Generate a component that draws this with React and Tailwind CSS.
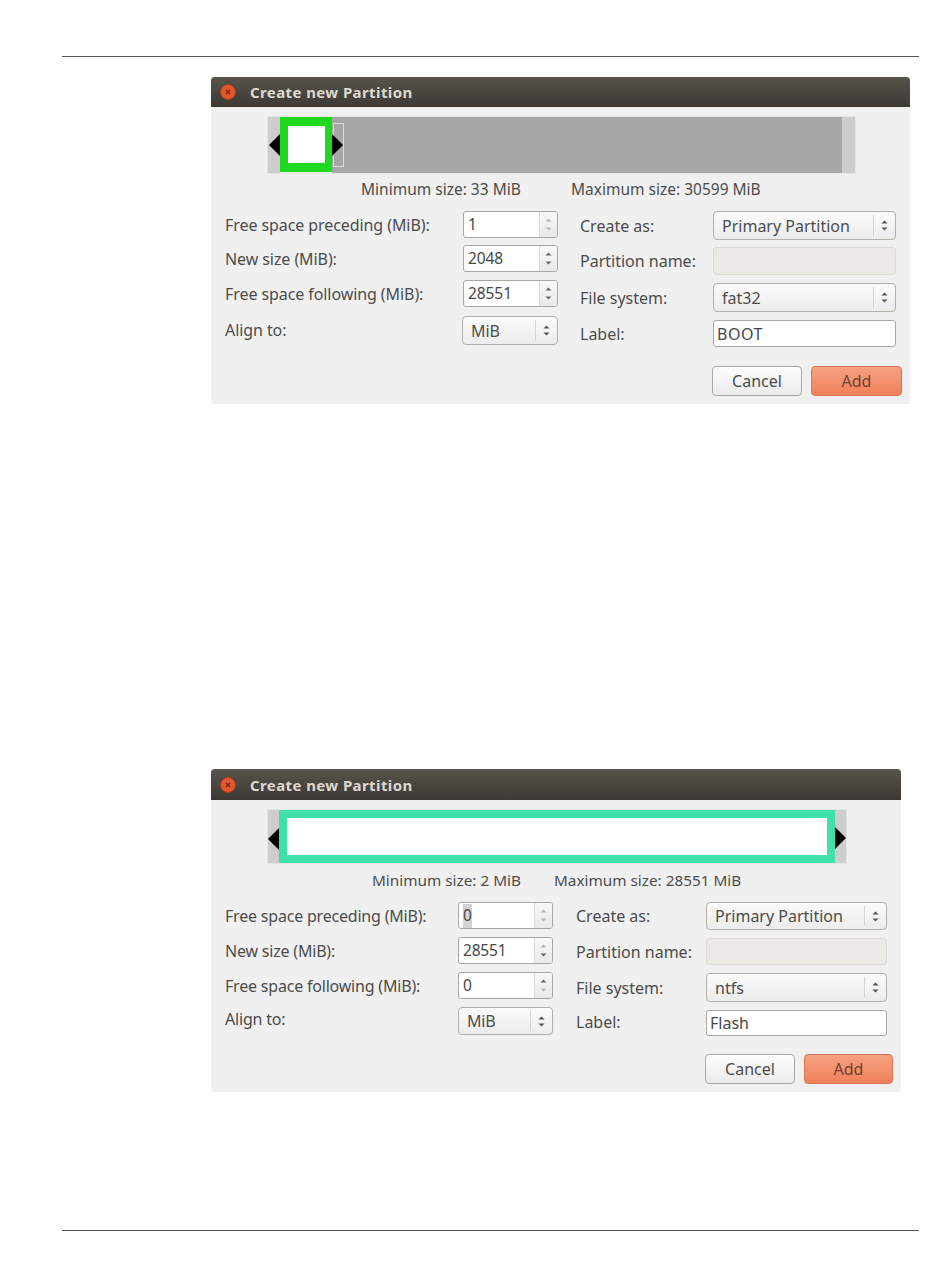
import React from "react";

const FONT = "font-['Noto_Sans','Open_Sans',sans-serif]";

function Tri({ down, className = "" }) {
  return (
    <svg width="7" height="4" viewBox="0 0 7 4" className={className}>
      <path d={down ? "M0.5 0.5h6L3.5 3.5z" : "M0.5 3.5h6L3.5 0.5z"} fill="currentColor" />
    </svg>
  );
}

function Arrow({ right, className }) {
  return (
    <svg viewBox="0 0 11 22" className={"absolute w-[11px] h-[22px] " + className}>
      <path d={right ? "M0 0L11 11L0 22z" : "M11 0L0 11L11 22z"} fill="#000" />
    </svg>
  );
}

function Spin({ value, className = "", selected, upDim, downDim }) {
  return (
    <div className={"flex w-[95px] rounded-[3px] border border-[#aba69f] bg-white overflow-hidden " + className}>
      <div className="flex-1 flex items-center pl-[4px] pt-[1px] text-[15.5px] text-[#474747]">
        <span className={selected ? "bg-[#d3d3d3]" : ""}>{value}</span>
      </div>
      <div className="w-[18px] flex flex-col items-center justify-center gap-[5px] border-l border-[#dcdad6] bg-gradient-to-b from-[#f8f8f8] to-[#e9e9e9]">
        <Tri className={upDim ? "text-[#b5b5b5]" : "text-[#666]"} />
        <Tri down className={downDim ? "text-[#b5b5b5]" : "text-[#666]"} />
      </div>
    </div>
  );
}

function Combo({ value, className = "" }) {
  return (
    <div className={"flex rounded-[4px] border border-[#b3aea7] bg-gradient-to-b from-[#fbfbfb] to-[#ececec] " + className}>
      <div className="flex-1 flex items-center pl-[8px] text-[16px] text-[#4c4c4c]">{value}</div>
      <div className="w-[22px] flex flex-col items-center justify-center gap-[3px] my-[3px] border-l border-[#d5d3cf] text-[#555]">
        <Tri />
        <Tri down />
      </div>
    </div>
  );
}

function Entry({ value, className = "" }) {
  return (
    <div className={"flex items-center pl-[3px] rounded-[3px] border border-[#aba69f] bg-white text-[16px] text-[#474747] " + className}>
      {value}
    </div>
  );
}

function Label({ children, className = "" }) {
  return <div className={"flex-1 text-[16px] leading-none whitespace-nowrap text-[#4c4c4c] " + className}>{children}</div>;
}

function TitleBar({ className }) {
  return (
    <div className={"flex items-center pl-[9px] rounded-t-[4px] bg-gradient-to-b from-[#57544b] to-[#3d3935] " + className}>
      <div className="w-[16px] h-[16px] rounded-full bg-[#e2552d] border border-[#a83d20] flex items-center justify-center">
        <svg width="8" height="8" viewBox="0 0 8 8">
          <path d="M2 2L6 6M6 2L2 6" stroke="#7a2a14" strokeWidth="1.3" />
        </svg>
      </div>
      <div className="ml-[14px] pt-[1px] text-[15px] font-bold tracking-[0.4px] text-[#dcd8cf]">Create new Partition</div>
    </div>
  );
}

function Buttons({ className, cancelW, addW }) {
  return (
    <div className={"flex justify-end gap-[9px] " + className}>
      <div className={"h-[30px] flex items-center justify-center rounded-[4px] border border-[#aba69f] bg-gradient-to-b from-[#fdfdfd] to-[#ebebeb] text-[16px] text-[#4c4c4c] " + cancelW}>
        Cancel
      </div>
      <div className={"h-[30px] flex items-center justify-center rounded-[4px] border border-[#d8744f] bg-gradient-to-b from-[#f7a283] to-[#ef8059] text-[16px] text-[#704030] " + addW}>
        Add
      </div>
    </div>
  );
}

function First() {
  return (
    <div className={"ml-[149px] w-[699px] h-[327px] bg-[#f0f0f0] flex flex-col " + FONT}>
      <TitleBar className="h-[30px]" />
      <div className="relative ml-[56px] mt-[9px] w-[589px] h-[58px] border border-[#e4e4e4] flex">
        <div className="w-[12px] bg-[#cdcdcd]" />
        <div className="w-[52px] h-[55px] border-l-[8px] border-r-[7px] border-y-[9px] border-[#1ed91e] bg-white" />
        <div className="flex-1 bg-[#a6a6a6]">
          <div className="ml-[1px] mt-[6px] w-[11px] h-[44px] border border-[#dcdcdc]" />
        </div>
        <div className="w-[13px] bg-[#cdcdcd]" />
        <Arrow className="left-[1px] top-[17px]" />
        <Arrow right className="left-[64px] top-[17px]" />
      </div>
      <div className="mt-[6px] h-[20px] flex items-center text-[15.5px] text-[#4c4c4c] whitespace-nowrap">
        <div className="ml-[150px] w-[210px]">Minimum size: 33 MiB</div>
        <div>Maximum size: 30599 MiB</div>
      </div>
      <div className="mt-[11px] flex">
        <div className="ml-[14px] w-[333px] flex flex-col tracking-[-0.08px]">
          <div className="flex items-center">
            <Label>Free space preceding (MiB):</Label>
            <Spin value="1" className="h-[27px]" upDim downDim />
          </div>
          <div className="mt-[7px] flex items-center">
            <Label>New size (MiB):</Label>
            <Spin value="2048" className="h-[27px]" />
          </div>
          <div className="mt-[8px] flex items-center">
            <Label>Free space following (MiB):</Label>
            <Spin value="28551" className="h-[27px]" />
          </div>
          <div className="mt-[9px] flex items-center">
            <Label className="pb-[2px]">Align to:</Label>
            <Combo value="MiB" className="w-[96px] h-[29px]" />
          </div>
        </div>
        <div className="ml-[22px] w-[316px] flex flex-col">
          <div className="flex items-center">
            <Label>Create as:</Label>
            <Combo value="Primary Partition" className="w-[183px] h-[29px]" />
          </div>
          <div className="mt-[7px] flex items-center">
            <Label>Partition name:</Label>
            <div className="w-[183px] h-[28px] rounded-[3px] border border-[#dedbd7] bg-[#ebe9e6]" />
          </div>
          <div className="mt-[8px] flex items-center">
            <Label>File system:</Label>
            <Combo value="fat32" className="w-[183px] h-[29px]" />
          </div>
          <div className="mt-[8px] flex items-center">
            <Label>Label:</Label>
            <Entry value="BOOT" className="w-[183px] h-[27px] tracking-[0.5px]" />
          </div>
        </div>
      </div>
      <Buttons className="mt-[19px] pr-[8px]" cancelW="w-[90px]" addW="w-[91px]" />
    </div>
  );
}

function Second() {
  return (
    <div className={"ml-[149px] w-[690px] h-[323px] bg-[#f0f0f0] flex flex-col " + FONT}>
      <TitleBar className="h-[31px]" />
      <div className="relative ml-[56px] mt-[9px] w-[580px] h-[55px] border border-[#e4e4e4] flex">
        <div className="w-[11px] bg-[#cdcdcd]" />
        <div className="flex-1 border-[8px] border-[#3fe0a9] bg-white" />
        <div className="w-[11px] bg-[#cdcdcd]" />
        <Arrow className="left-[0px] top-[18px]" />
        <Arrow right className="left-[567px] top-[17px]" />
      </div>
      <div className="mt-[6px] h-[20px] flex items-center text-[15.3px] text-[#4c4c4c] whitespace-nowrap">
        <div className="ml-[161px] w-[182px]">Minimum size: 2 MiB</div>
        <div>Maximum size: 28551 MiB</div>
      </div>
      <div className="mt-[12px] flex">
        <div className="ml-[14px] w-[328px] flex flex-col tracking-[-0.2px]">
          <div className="flex items-center">
            <Label>Free space preceding (MiB):</Label>
            <Spin value="0" className="h-[27px]" selected upDim downDim />
          </div>
          <div className="mt-[8px] flex items-center">
            <Label>New size (MiB):</Label>
            <Spin value="28551" className="h-[27px]" upDim />
          </div>
          <div className="mt-[8px] flex items-center">
            <Label>Free space following (MiB):</Label>
            <Spin value="0" className="h-[27px]" downDim />
          </div>
          <div className="mt-[8px] flex items-center">
            <Label className="pb-[5px]">Align to:</Label>
            <Combo value="MiB" className="w-[95px] h-[28px]" />
          </div>
        </div>
        <div className="ml-[23px] w-[311px] flex flex-col">
          <div className="flex items-center">
            <Label>Create as:</Label>
            <Combo value="Primary Partition" className="w-[181px] h-[28px]" />
          </div>
          <div className="mt-[8px] flex items-center">
            <Label>Partition name:</Label>
            <div className="w-[181px] h-[27px] rounded-[3px] border border-[#dedbd7] bg-[#ebe9e6]" />
          </div>
          <div className="mt-[8px] flex items-center">
            <Label>File system:</Label>
            <Combo value="ntfs" className="w-[181px] h-[29px]" />
          </div>
          <div className="mt-[8px] flex items-center">
            <Label className="pb-[2px]">Label:</Label>
            <Entry value="Flash" className="w-[181px] h-[26px]" />
          </div>
        </div>
      </div>
      <Buttons className="mt-[18px] pr-[8px]" cancelW="w-[90px]" addW="w-[89px]" />
    </div>
  );
}

export default function App() {
  return (
    <div className="w-[950px] h-[1267px] bg-white pl-[62px] pr-[31px] pt-[56px] overflow-hidden">
      <div className="h-px bg-[#555]" />
      <div className="mt-[20px]">
        <First />
      </div>
      <div className="mt-[365px]">
        <Second />
      </div>
      <div className="mt-[138px] h-px bg-[#555]" />
    </div>
  );
}
